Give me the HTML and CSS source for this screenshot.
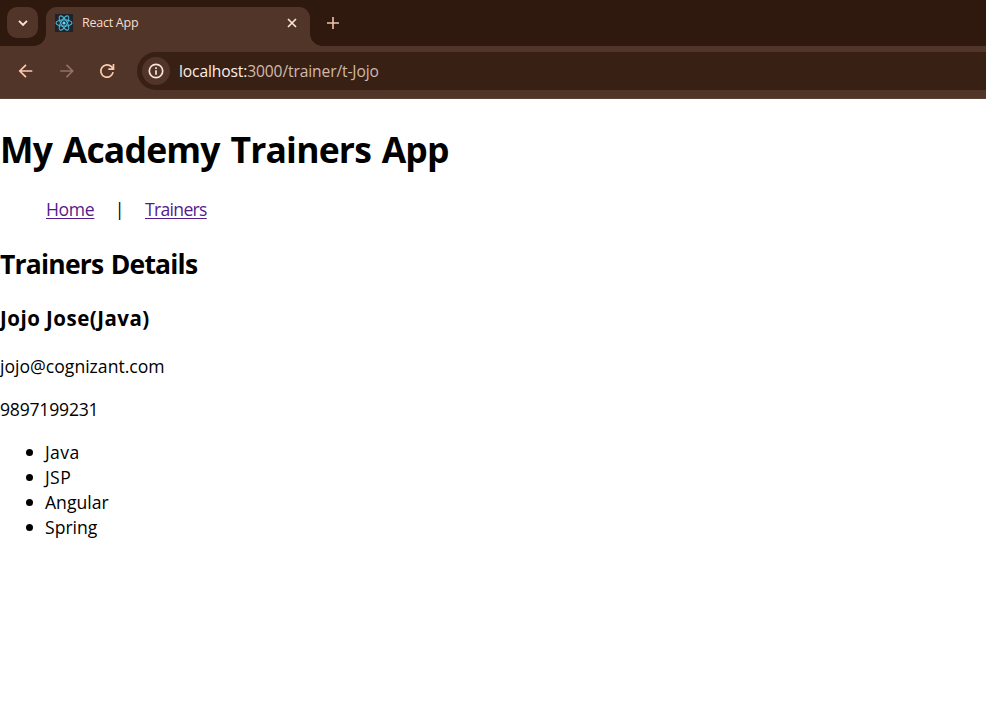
FILE: index.html
```html
<!DOCTYPE html>
<html lang="en">
<head>
<meta charset="utf-8">
<title>React App</title>
<link rel="stylesheet" href="styles.css">
</head>
<body>
<header class="browser">
  <div class="tabstrip">
    <button class="tab-search" aria-label="Search tabs">
      <svg width="12" height="8" viewBox="0 0 12 8"><path d="M2 1.8 6 5.8 10 1.8"/></svg>
    </button>
    <div class="tab">
      <svg class="favicon" width="18" height="18" viewBox="0 0 18 18">
        <rect width="18" height="18" fill="#20232a"/>
        <g fill="none" stroke="#4bb4d2" stroke-width="1.1">
          <ellipse cx="9" cy="9" rx="8" ry="3.1"/>
          <ellipse cx="9" cy="9" rx="8" ry="3.1" transform="rotate(60 9 9)"/>
          <ellipse cx="9" cy="9" rx="8" ry="3.1" transform="rotate(120 9 9)"/>
        </g>
        <circle cx="9" cy="9" r="1.6" fill="#61dafb"/>
      </svg>
      <span class="tab-title">React App</span>
      <svg class="tab-close" width="12" height="12" viewBox="0 0 12 12"><path d="M2 2 10 10M10 2 2 10"/></svg>
    </div>
    <svg class="new-tab" width="14" height="14" viewBox="0 0 14 14"><path d="M7 1V13M1 7H13"/></svg>
  </div>
  <div class="toolbar">
    <svg class="tool" width="16" height="16" viewBox="0 0 16 16"><path d="M14.3 8H2M8 1.8 1.8 8 8 14.2"/></svg>
    <svg class="tool dim" width="16" height="16" viewBox="0 0 16 16"><path d="M1.2 8H13.5M7.5 1.8 13.7 8 7.5 14.2"/></svg>
    <svg class="tool" width="16" height="16" viewBox="0 0 16 16"><path d="M14.1 9.2A6.2 6.2 0 1 1 12.5 3.7L14.2 5.6M14.5 1V6.2H9.3"/></svg>
    <div class="address">
      <span class="site-info">
        <svg width="16" height="16" viewBox="0 0 16 16"><circle cx="8" cy="8" r="6.7"/><path d="M8 7.2V11.8M8 4.2V5.9"/></svg>
      </span>
      <span class="url"><span class="host">localhost:</span>3000/trainer/t-Jojo</span>
    </div>
  </div>
</header>
<main class="page">
  <h1>My Academy Trainers App</h1>
  <nav><a class="home" href="#">Home</a><span class="bar">|</span><a class="trainers" href="#">Trainers</a></nav>
  <h2>Trainers Details</h2>
  <h3>Jojo Jose(Java)</h3>
  <p class="email">jojo@cognizant.com</p>
  <p class="phone">9897199231</p>
  <ul>
    <li class="java">Java</li>
    <li class="jsp">JSP</li>
    <li class="angular">Angular</li>
    <li class="spring">Spring</li>
  </ul>
</main>
</body>
</html>
```
FILE: styles.css
```css
* { box-sizing: border-box; }
body {
  margin: 0;
  background: #fff;
  color: #000;
  font-family: "Open Sans", "Noto Sans", sans-serif;
  font-size: 17.6px;
  line-height: 25px;
}
svg { display: block; fill: none; flex: none; }
.tabstrip {
  height: 46px;
  padding: 7px 0 0 7px;
  display: flex;
  align-items: flex-start;
  background: #2f190e;
}
.tab-search {
  width: 31px;
  height: 31px;
  margin: 0 8px 0 0;
  padding: 0;
  border: 0;
  border-radius: 10px;
  background: #503528;
  display: grid;
  place-items: center;
}
.tab-search svg { stroke: #fbe5d8; stroke-width: 1.9; }
.tab {
  position: relative;
  width: 264px;
  height: 39px;
  padding: 0 12px 7px 9px;
  border-radius: 11px 11px 0 0;
  background: #503528;
  display: flex;
  align-items: center;
}
.tab::before, .tab::after {
  content: "";
  position: absolute;
  bottom: 0;
  width: 12px;
  height: 12px;
}
.tab::before { right: 100%; background: radial-gradient(circle at 0 0, transparent 11.5px, #503528 12px); }
.tab::after { left: 100%; background: radial-gradient(circle at 100% 0, transparent 11.5px, #503528 12px); }
.tab-title {
  flex: 1;
  margin-left: 9px;
  font-size: 12.5px;
  letter-spacing: -0.25px;
  line-height: 18px;
  color: #f8ddd0;
}
.tab-close { stroke: #fbe5d8; stroke-width: 1.7; }
.new-tab { margin: 9px 0 0 16px; stroke: #f0c2a8; stroke-width: 1.6; }
.toolbar {
  height: 53px;
  padding: 6px 0 8px 18px;
  display: flex;
  align-items: center;
  gap: 24.5px;
  background: #503528;
  border-bottom: 1px solid #5a4237;
}
.tool { stroke: #fbc9ad; stroke-width: 1.7; }
.tool.dim { stroke: #937262; }
.address {
  flex: 1;
  height: 38px;
  margin-left: -2.5px;
  padding-left: 5px;
  border-radius: 19px 0 0 19px;
  background: #382114;
  display: flex;
  align-items: center;
}
.site-info {
  width: 28px;
  height: 28px;
  border-radius: 50%;
  background: #503528;
  display: grid;
  place-items: center;
}
.site-info svg { stroke: #fbe5d8; stroke-width: 1.7; }
.url {
  margin-left: 9px;
  font-size: 15.6px;
  letter-spacing: -0.12px;
  line-height: 22px;
  color: #d2b9ac;
}
.host { color: #fdeee6; }
h1, h2, h3, p, ul, nav { margin: 0; white-space: nowrap; }
.page { padding-top: 25px; }
h1 { font-size: 35.5px; line-height: 51px; letter-spacing: -0.8px; word-spacing: 2.2px; }
nav { display: flex; padding-left: 46px; margin-top: 22px; }
a { color: #551a8b; text-decoration-thickness: 1px; text-underline-offset: 2px; }
.home { letter-spacing: -0.35px; }
.trainers { letter-spacing: -0.7px; }
.bar { margin: 0 20.5px; }
h2 { margin-top: 24px; font-size: 26.5px; line-height: 36px; letter-spacing: -0.8px; word-spacing: 1.3px; }
h3 { margin-top: 21px; font-size: 20.5px; line-height: 30px; letter-spacing: 0.47px; }
.email { margin-top: 21px; }
.phone { margin-top: 18px; letter-spacing: -0.22px; }
ul { margin-top: 18px; padding-left: 45px; list-style: none; }
li { display: flex; align-items: center; }
li::before {
  content: "";
  width: 7px;
  height: 7px;
  margin: 0 12px 0 -19px;
  border-radius: 50%;
  background: #000;
}
.java, .jsp { letter-spacing: 0.4px; }
```
